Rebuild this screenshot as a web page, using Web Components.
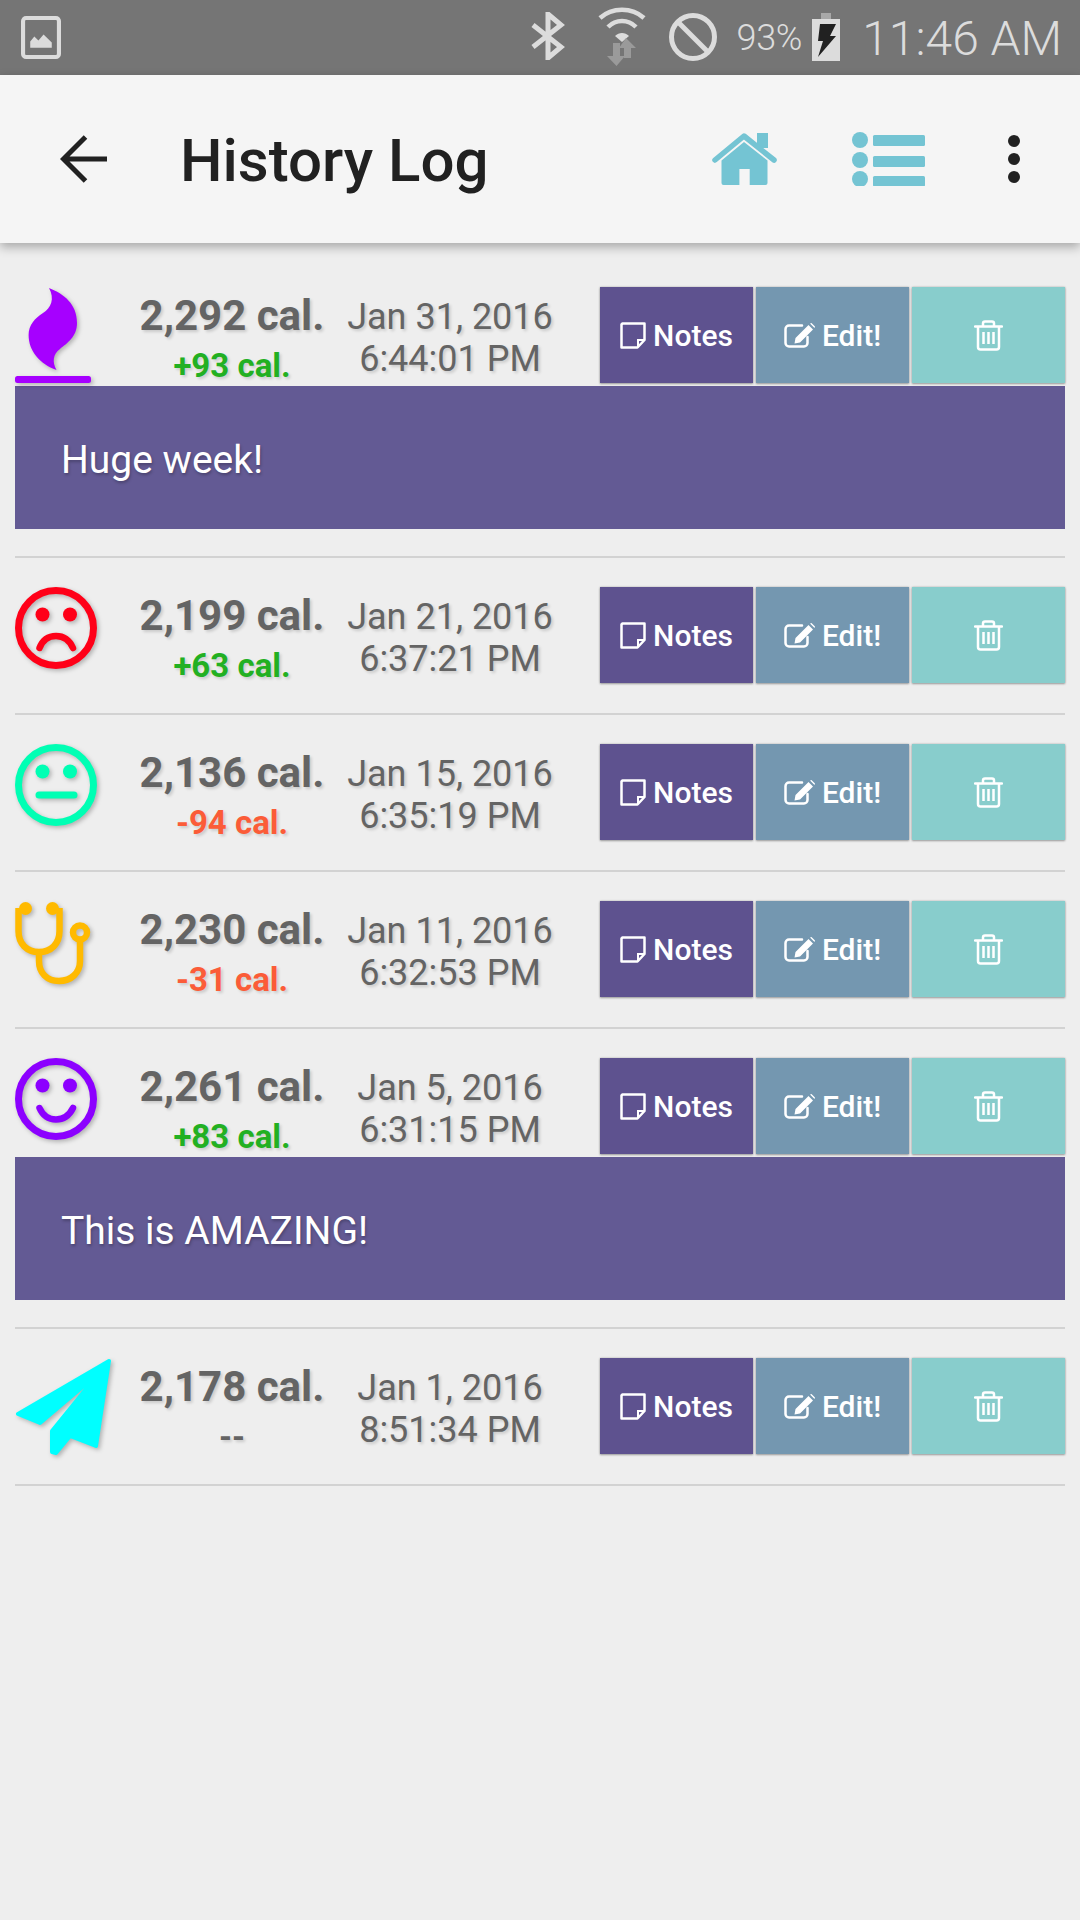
<!DOCTYPE html>
<html lang="en"><head><meta charset="utf-8"><title>History Log</title>
<style>
html,body{margin:0;padding:0;background:#eee;height:1920px;overflow:hidden;font-family:Roboto,"Liberation Sans",sans-serif}
</style></head><body>
<status-bar></status-bar>
<app-bar label="History Log"></app-bar>
<history-list>
<history-entry icon="flame" cal="2,292 cal." delta="+93 cal." date="Jan 31, 2016" time="6:44:01 PM"><note-panel>Huge week!</note-panel></history-entry>
<history-entry icon="sad" cal="2,199 cal." delta="+63 cal." date="Jan 21, 2016" time="6:37:21 PM"></history-entry>
<history-entry icon="neutral" cal="2,136 cal." delta="-94 cal." date="Jan 15, 2016" time="6:35:19 PM"></history-entry>
<history-entry icon="steth" cal="2,230 cal." delta="-31 cal." date="Jan 11, 2016" time="6:32:53 PM"></history-entry>
<history-entry icon="happy" cal="2,261 cal." delta="+83 cal." date="Jan 5, 2016" time="6:31:15 PM"><note-panel>This is AMAZING!</note-panel></history-entry>
<history-entry icon="plane" cal="2,178 cal." delta="--" date="Jan 1, 2016" time="8:51:34 PM"></history-entry>
</history-list>
<script>
const ICONS={
flame:`<path fill="#a600ff" d="M34 1C49 7 62 17 62 36C62 50 52 56 45 62C38 67 37 75 41.5 83C25 77 13.600 64 13.600 48C13.600 38 20 31 28 26C36 21 40 12 34 1Z"/><rect x="0" y="89" width="76" height="7" rx="2.5" fill="#a600ff"/>`,
sad:`<g fill="none" stroke="#ff0018"><circle cx="41" cy="41" r="37.5" stroke-width="7"/><path stroke-width="6.5" stroke-linecap="round" d="M24.5 61C28 52 34 49 41 49S54 52 58 61"/></g><circle cx="27.5" cy="27.5" r="7" fill="#ff0018"/><circle cx="55" cy="27.5" r="7" fill="#ff0018"/>`,
neutral:`<g fill="none" stroke="#00ffb4"><circle cx="41" cy="41" r="37.5" stroke-width="7"/><path stroke-width="7" stroke-linecap="round" d="M24 51H59"/></g><circle cx="27.5" cy="27.5" r="7" fill="#00ffb4"/><circle cx="55" cy="27.5" r="7" fill="#00ffb4"/>`,
happy:`<g fill="none" stroke="#8c00ff"><circle cx="41" cy="41" r="37.5" stroke-width="7"/><path stroke-width="6.5" stroke-linecap="round" d="M24.5 50C28 58 34 61.5 41 61.5S54 58 58 50"/></g><circle cx="27.5" cy="27.5" r="7" fill="#8c00ff"/><circle cx="55" cy="27.5" r="7" fill="#8c00ff"/>`,
steth:`<g fill="none" stroke="#ffba00" stroke-width="6.5"><path d="M3.5 7V30C3.5 43 12 51 24 51S44.5 43 44.5 30V7"/><path d="M24 51V60C24 72 32 80 44 80S65 72 65 60V40"/><circle cx="65" cy="31.5" r="7"/></g><circle cx="10.5" cy="7.5" r="6.5" fill="#ffba00"/><circle cx="37.5" cy="7.5" r="6.5" fill="#ffba00"/>`,
plane:`<path fill="#00ffff" stroke="#00ffff" stroke-width="4" stroke-linejoin="round" d="M94 3L3 56L25 65L84 15L37 73V94L41 95L55 78L81 88Z"/>`
};
function def(name,css,html){
  customElements.define(name,class extends HTMLElement{
    constructor(){super();this.attachShadow({mode:'open'});}
    connectedCallback(){
      const a=n=>this.getAttribute(n)||'';
      this.shadowRoot.innerHTML=`<style>${css}</style>`+(typeof html==='function'?html(a):html);
    }
  });
}
def('status-bar',`
:host{display:flex;align-items:center;height:75px;background:#757575;color:#dcdcdc;font-family:Roboto,sans-serif;font-weight:300;box-sizing:border-box;padding-left:21px}
svg{display:block;flex:none}
.sp{flex:1}
.pct{font-size:36px;line-height:75px;margin-left:20px;position:relative;top:1px;letter-spacing:-.3px}
.time{font-size:48px;line-height:75px;margin-left:21px;margin-right:18px;position:relative;top:1px}
`,`
<svg width="40" height="43" viewBox="0 0 39 42" preserveAspectRatio="none" style="margin-top:-1px"><rect x="2" y="2" width="35" height="38" rx="3" fill="none" stroke="#dcdcdc" stroke-width="4"/><path fill="#dcdcdc" d="M9 31V25L13 20L17 24L22 18L30 26V31Z"/></svg>
<span class="sp"></span>
<svg width="36" height="48" viewBox="0 0 36 48" style="margin-top:-3px"><path fill="none" stroke="#dcdcdc" stroke-width="5" d="M2 13L30 35L17 46V2L30 13L2 35"/></svg>
<svg width="50" height="60" viewBox="0 0 50 60" style="margin-left:30px;margin-top:-2px"><path fill="none" stroke="#dcdcdc" stroke-width="4.5" d="M3 11C15 0 35 0 47 11M11 20C19 12 31 12 39 20"/><path fill="#dcdcdc" d="M18 29C22 25 28 25 32 29L25 35Z"/><path fill="#9a9a9a" d="M15 37H22V50H27L18.500 60L9 50H15ZM28 32L38 42H33V52H26V42H21Z" transform="translate(1 -1)"/></svg>
<svg width="48" height="48" viewBox="0 0 48 48" style="margin-left:22px;margin-top:-2px"><circle cx="24" cy="24" r="21.500" fill="none" stroke="#dcdcdc" stroke-width="5"/><path stroke="#dcdcdc" stroke-width="5" d="M10 10L38 38"/></svg>
<span class="pct">93%</span>
<svg width="30" height="49" viewBox="0 0 30 49" style="margin-left:9px;margin-top:-1px"><path fill="#a8a8a8" d="M10 0H20V6H29V10H1V6H10Z"/><rect x="1" y="6" width="28" height="42" fill="#dcdcdc"/><path fill="#212121" d="M9 11H25L19 23H25L7 44L12 28H7Z"/></svg>
<span class="time">11:46 AM</span>
`);
def('app-bar',`
:host{display:flex;align-items:center;height:168px;background:#f5f5f5;box-shadow:0 4px 10px rgba(0,0,0,.3);position:relative;z-index:1;box-sizing:border-box;padding-left:60px;font-family:Roboto,sans-serif}
svg{display:block;flex:none}
.t{font-size:60px;font-weight:500;color:#212121;margin-left:73px;flex:1;line-height:164px;padding-top:4px}
`,a=>`
<svg width="47" height="50" viewBox="0 0 47 50"><path fill="none" stroke="#212121" stroke-width="5" d="M47 25H4M25.500 3L3.500 25L25.500 47"/></svg>
<span class="t">${a('label')}</span>
<svg width="65" height="53" viewBox="0 0 65 53" style="margin-right:75px"><path fill="#74c4d3" d="M45 0H56V15H45ZM32 9L55.500 27.500V50A2 2 0 0 1 53.500 52H37.700V36H27.400V52H11.500A2 2 0 0 1 9.500 50V27.500Z"/><path fill="none" stroke="#74c4d3" stroke-width="5.500" stroke-linecap="round" stroke-linejoin="round" d="M3 27L32 3L62 27"/></svg>
<svg width="73" height="54" viewBox="0 0 73 54" style="margin-right:83px"><g fill="#74c4d3"><circle cx="8" cy="8" r="8"/><circle cx="8" cy="28" r="8"/><circle cx="8" cy="47" r="8"/><rect x="21" y="3" width="52" height="11" rx="1.500"/><rect x="21" y="24" width="52" height="11" rx="1.500"/><rect x="21" y="44" width="52" height="10.500" rx="1.500"/></g></svg>
<svg width="12" height="48" viewBox="0 0 12 48" style="margin-right:60px"><g fill="#212121"><circle cx="6" cy="6" r="6"/><circle cx="6" cy="24" r="6"/><circle cx="6" cy="42" r="6"/></g></svg>
`);
def('history-list',`:host{display:block;padding-top:15px}`,`<slot></slot>`);
def('action-button',`
:host{display:flex;flex:none;align-items:center;justify-content:center;gap:7px;width:153px;height:96px;background:var(--bg);box-shadow:0 1px 2px rgba(0,0,0,.3),0 0 2px rgba(0,0,0,.22);color:#fff;font:500 30px Roboto,sans-serif}
svg{display:block;flex:none}
`,a=>({
notes:`<svg width="26" height="27" viewBox="0 0 26 27"><path fill="none" stroke="#fff" stroke-width="2.500" stroke-linejoin="round" d="M2.500 1.500H24.500V18L17.500 25.500H1.500V2.500Z"/><path fill="none" stroke="#fff" stroke-width="2" d="M24 18H18V25"/></svg>`,
edit:`<svg width="31" height="25" viewBox="0 0 31 25"><path fill="none" stroke="#fff" stroke-width="2.500" stroke-linecap="round" d="M18 2.500H5A3.500 3.500 0 0 0 1.500 6V20A3.500 3.500 0 0 0 5 23.500H20A3.500 3.500 0 0 0 23.500 20V14"/><path fill="#fff" d="M24.500 2L29 6.500L16 19.500L10.500 20.500L11.500 15ZM26 .5L30.500 5L31 3.500L27.500 0Z"/></svg>`,
trash:`<svg width="29" height="31" viewBox="0 0 29 31"><g fill="none" stroke="#fff" stroke-width="2.500" stroke-linecap="round"><path d="M1 6.500H28M9 6V3.500A2 2 0 0 1 11 1.500H18A2 2 0 0 1 20 3.500V6M4 7V27A2.500 2.500 0 0 0 6.500 29.500H22.500A2.500 2.500 0 0 0 25 27V7"/></g><path stroke="#fff" stroke-width="2.500" d="M9.500 12V24M14.500 12V24M19.500 12V24"/></svg>`
}[a('kind')])+`<slot></slot>`);
def('note-panel',`
:host{display:flex;align-items:center;height:143px;margin:3px 0 -3px;background:#635a94;color:#fff;font:400 39px Roboto,sans-serif;padding:4px 0 0 46px;box-sizing:border-box;text-shadow:1px 2px 3px rgba(0,0,0,.25)}
`,`<slot></slot>`);
def('history-entry',`
:host{display:block;margin:0 15px;padding:29px 0 30px;border-bottom:2px solid #d2d2d2;font-family:Roboto,sans-serif}
.row{display:grid;grid-template-columns:105px 224px 212px 509px;height:96px;align-items:start}
.ic{display:block;overflow:visible;filter:drop-shadow(2px 2px 2px rgba(0,0,0,.25))}
.cal{text-align:center;color:#646464;text-shadow:2px 2px 3px rgba(0,0,0,.15)}
.c1{font-weight:700;font-size:42px;line-height:48px;margin-top:5px;height:48px}
.c2{font-weight:700;font-size:33px;line-height:38px;margin-top:7px;color:var(--dc)}
.date{text-align:center;color:#646464;font-size:36px;line-height:42px;margin-top:9px;text-shadow:2px 2px 3px rgba(0,0,0,.15)}
.btns{display:flex;gap:3px;margin-left:44px}
`,a=>{
 const d=a('delta');const dc=d[0]==='+'?'#22b022':d[0]==='-'&&d!=='--'?'#fb5c38':'#646464';
 return `<div class="row">
 <svg class="ic" width="105" height="96" viewBox="0 0 105 96">${ICONS[a('icon')]}</svg>
 <div class="cal"><div class="c1">${a('cal')}</div><div class="c2" style="--dc:${dc}">${d}</div></div>
 <div class="date">${a('date')}<br>${a('time')}</div>
 <div class="btns"><action-button kind="notes" style="--bg:#5e528f">Notes</action-button><action-button kind="edit" style="--bg:#7497b0">Edit!</action-button><action-button kind="trash" style="--bg:#88cdcc"></action-button></div>
 </div><slot></slot>`;
});
</script>
</body></html>
